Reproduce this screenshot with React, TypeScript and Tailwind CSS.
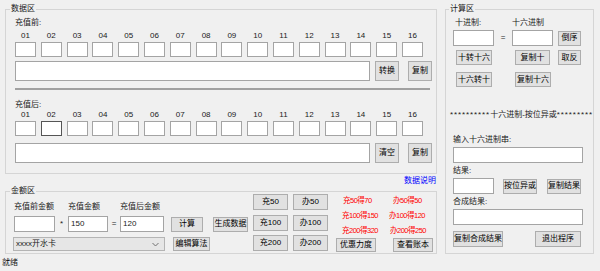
import React from 'react';

type P = { children?: React.ReactNode; className?: string };

const Btn = ({ children, className = '' }: P) => (
  <button className={`flex shrink-0 items-center justify-center border border-[#adadad] bg-[#e1e1e1] text-[8px] leading-none text-black ${className}`}>
    {children}
  </button>
);

const Box = ({ children, className = '' }: P) => (
  <div className={`flex shrink-0 items-center border border-[#a4a4a4] bg-white pl-[2px] text-[8px] leading-none ${className}`}>
    {children}
  </div>
);

const nums = ['01', '02', '03', '04', '05', '06', '07', '08', '09', '10', '11', '12', '13', '14', '15', '16'];

const ByteRow = ({ focus }: { focus?: number }) => (
  <>
    <div className="grid grid-cols-[repeat(16,21px)] gap-x-[4.8px]">
      {nums.map((n) => (
        <div key={n} className="h-[10px] text-center leading-[10px]">{n}</div>
      ))}
    </div>
    <div className="mt-[1px] grid grid-cols-[repeat(16,21px)] gap-x-[4.8px]">
      {nums.map((n, i) => (
        <div key={n} className={`h-[15px] border bg-white ${i === focus ? 'border-[#555555]' : 'border-[#a4a4a4]'}`} />
      ))}
    </div>
  </>
);

export default function App() {
  return (
    <div className="flex h-[271px] w-[600px] flex-col overflow-hidden bg-[#f0f0f0] font-['Liberation_Sans','Noto_Sans_CJK_SC',sans-serif] text-[8px] leading-[10px] text-[#1a1a1a]">
      <div className="flex pl-[5px] pt-[4px]">
        {/* left column */}
        <div className="flex w-[432px] flex-col">
          {/* 数据区 */}
          <fieldset className="h-[170px] border border-[#d5d5d5]">
            <legend className="ml-[4px] px-[1px] leading-[10px]">数据区</legend>
            <div className="pl-[9px] pt-[4px]">
              <div className="h-[10px]">充值前:</div>
              <div className="mt-[3px]">
                <ByteRow />
              </div>
              <div className="mt-[4px] flex h-[20px]">
                <Box className="w-[355px]" />
                <Btn className="ml-[5px] w-[24px]">转换</Btn>
                <Btn className="ml-[9px] w-[24px]">复制</Btn>
              </div>
              <div className="mt-[7px] h-[2px] w-[415px] bg-[#a0a0a0]" />
              <div className="mt-[10px] h-[10px]">充值后:</div>
              <ByteRow focus={1} />
              <div className="mt-[7px] flex h-[20px]">
                <Box className="w-[355px]" />
                <Btn className="ml-[5px] w-[24px]">清空</Btn>
                <Btn className="ml-[9px] w-[24px]">复制</Btn>
              </div>
            </div>
          </fieldset>

          <div className="flex h-[12px] items-end justify-end pr-[1px]">
            <span className="text-[#0000ff]">数据说明</span>
          </div>

          {/* 金额区 */}
          <fieldset className="h-[68px] border border-[#d5d5d5]">
            <legend className="ml-[4px] px-[1px] leading-[10px]">金额区</legend>
            <div className="flex items-start pl-[8px]">
              <div className="mt-[6px] flex flex-col">
                <div className="flex h-[10px] whitespace-nowrap">
                  <div className="w-[54px]">充值前金额</div>
                  <div className="w-[52px]">充值金额</div>
                  <div>充值后金额</div>
                </div>
                <div className="mt-[4px] flex h-[16px] items-center">
                  <Box className="h-[16px] w-[41px]" />
                  <div className="w-[13px] text-center">*</div>
                  <Box className="h-[16px] w-[40px]">150</Box>
                  <div className="w-[12px] text-center">=</div>
                  <Box className="h-[16px] w-[44px]">120</Box>
                  <Btn className="ml-[7px] h-[15px] w-[32px]">计算</Btn>
                  <Btn className="ml-[10px] h-[15px] w-[35px]">生成数据</Btn>
                </div>
                <div className="mt-[5px] flex h-[14px]">
                  <div className="-ml-[1px] flex w-[152px] items-center justify-between border border-[#b4b4b4] bg-[#e6e6e6] pl-[2px] pr-[5px]">
                    <span>xxxx开水卡</span>
                    <svg width="7" height="5" viewBox="0 0 7 5">
                      <polyline points="0.5,1 3.5,4 6.5,1" fill="none" stroke="#707070" strokeWidth="1" />
                    </svg>
                  </div>
                  <Btn className="ml-[8px] w-[37px]">编辑算法</Btn>
                </div>
              </div>

              <div className="-mt-[2px] ml-[5px] grid grid-cols-[35px_35px] gap-x-[5px] gap-y-[4.5px]">
                <Btn className="h-[16px]">充50</Btn>
                <Btn className="h-[16px]">办50</Btn>
                <Btn className="h-[16px]">充100</Btn>
                <Btn className="h-[16px]">办100</Btn>
                <Btn className="h-[16px]">充200</Btn>
                <Btn className="h-[16px]">办200</Btn>
              </div>

              <div className="ml-[8px] grid grid-cols-[57px_40px] text-[7.5px] tracking-[-0.5px] text-[#ff0000]">
                <div className="h-[15px] whitespace-nowrap pl-[7px]">充50得70</div>
                <div className="h-[15px] whitespace-nowrap">办50得50</div>
                <div className="h-[15px] whitespace-nowrap pl-[6px]">充100得150</div>
                <div className="-ml-[4px] h-[15px] whitespace-nowrap">办100得120</div>
                <div className="h-[12px] whitespace-nowrap pl-[6px]">充200得320</div>
                <div className="-ml-[3px] h-[12px] whitespace-nowrap">办200得250</div>
                <Btn className="h-[14px] w-[40px] tracking-normal">优惠力度</Btn>
                <Btn className="h-[14px] w-[40px] tracking-normal">查看账本</Btn>
              </div>
            </div>
          </fieldset>
        </div>

        {/* 计算区 */}
        <fieldset className="ml-[8px] h-[250px] w-[149px] border border-[#d5d5d5]">
          <legend className="ml-[3px] px-[1px] leading-[10px]">计算区</legend>
          <div className="pl-[7px] pt-[4px]">
            <div className="flex h-[10px]">
              <div className="w-[59px] pl-[2px]">十进制:</div>
              <div>十六进制</div>
            </div>
            <div className="mt-[2px] flex h-[16px] items-center">
              <Box className="h-[16px] w-[41px]" />
              <div className="w-[18px] text-center">=</div>
              <Box className="h-[16px] w-[41px]" />
              <Btn className="ml-[5px] h-[15px] w-[23px]">倒序</Btn>
            </div>
            <div className="mt-[4px] flex h-[15px]">
              <Btn className="ml-[3px] w-[36px]">十转十六</Btn>
              <Btn className="ml-[23px] w-[35px]">复制十</Btn>
              <Btn className="ml-[8px] w-[23px]">取反</Btn>
            </div>
            <div className="mt-[7px] flex h-[15px]">
              <Btn className="ml-[3px] w-[36px]">十六转十</Btn>
              <Btn className="ml-[23px] w-[36px]">复制十六</Btn>
            </div>
            <div className="-ml-[3px] mt-[23px] h-[10px] whitespace-nowrap">
              <span className="tracking-[0.9px]">**********</span>十六进制-按位异或<span className="tracking-[0.9px]">*********</span>
            </div>
            <div className="mt-[15px] h-[10px]">输入十六进制串:</div>
            <Box className="mt-[2px] h-[16px] w-[130px]" />
            <div className="mt-[3px] h-[10px]">结果:</div>
            <div className="mt-[2px] flex h-[16px] items-center">
              <Box className="h-[16px] w-[41px]" />
              <Btn className="ml-[9px] h-[15px] w-[34px]">按位异或</Btn>
              <Btn className="ml-[10px] h-[15px] w-[34px]">复制结果</Btn>
            </div>
            <div className="mt-[3px] h-[10px]">合成结果:</div>
            <Box className="mt-[2px] h-[16px] w-[130px]" />
            <div className="mt-[6px] flex h-[16px]">
              <Btn className="w-[50px]">复制合成结果</Btn>
              <Btn className="ml-[32px] w-[46px]">退出程序</Btn>
            </div>
          </div>
        </fieldset>
      </div>

      <div className="pl-[2px] pt-[4px]">就绪</div>
    </div>
  );
}
